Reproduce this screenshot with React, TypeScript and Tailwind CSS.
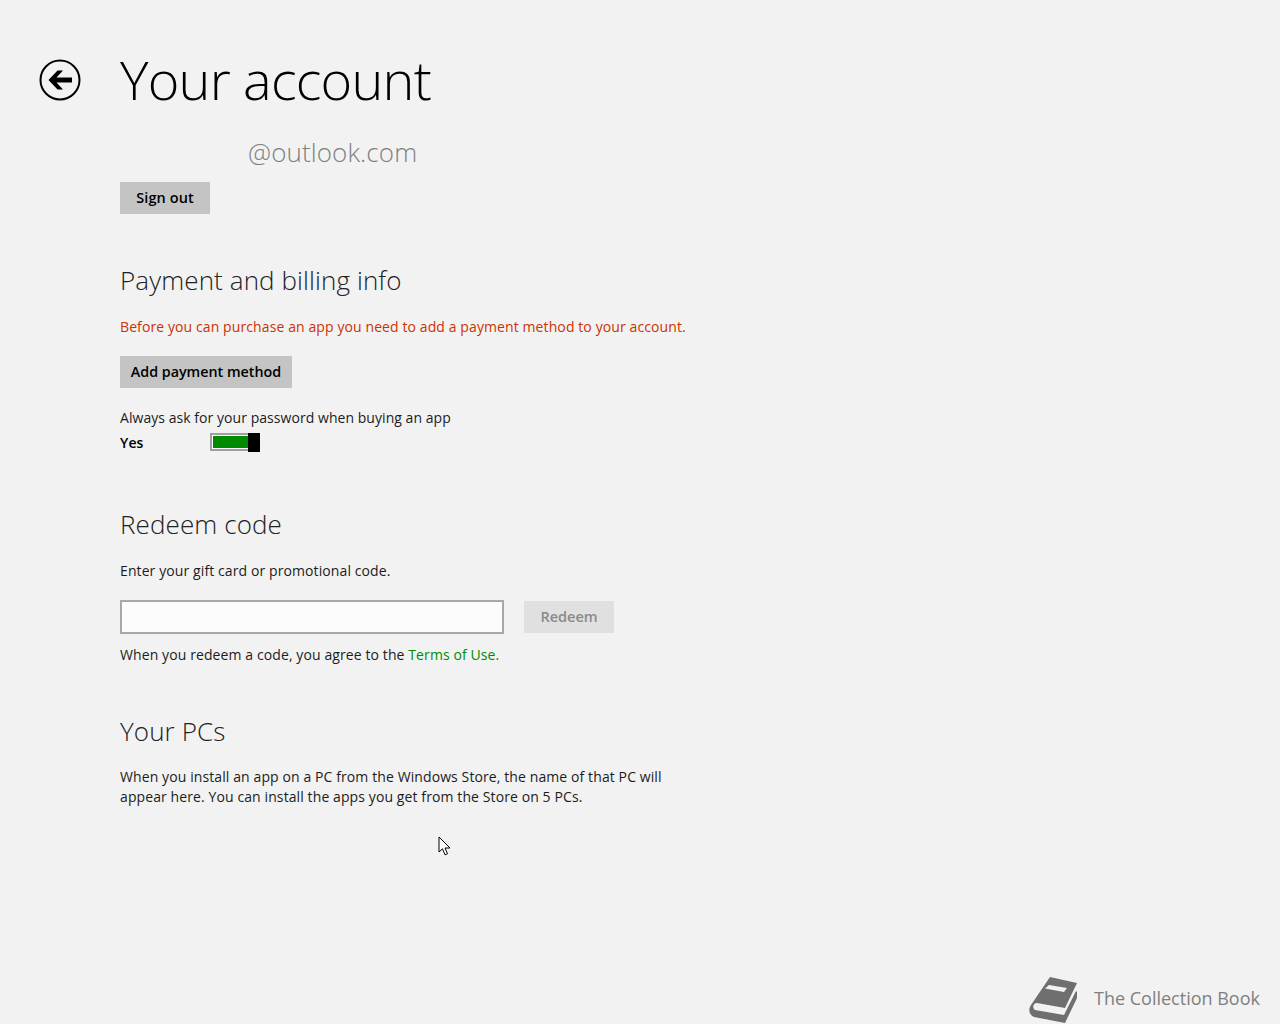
import React from "react";

const FONT = "font-['Open_Sans','Noto_Sans',sans-serif]";

function BackIcon() {
  return (
    <svg width="42" height="42" viewBox="0 0 42 42" className="block">
      <circle cx="21" cy="21" r="19.5" fill="none" stroke="#000" strokeWidth="2" />
      <path d="M9.5 21 L18.5 11.5 L24 11.5 L17.5 18.5 L33 18.5 L33 23.5 L17.5 23.5 L24 30.5 L18.5 30.5 Z" fill="#000" />
    </svg>
  );
}

function BookIcon() {
  return (
    <svg width="52" height="48" viewBox="0 0 52 48" className="block">
      <path
        d="M23 2 L50 8 L38 33 L10 28 C6 28 5 33 8 35 L37 40 L49 16 L50 17 L50 23 L38 48 L7 42 C2 40 1 34 4 30 Z"
        fill="#6f6f6f"
      />
      <path d="M22 10 L40 13 L37 17 L18 13.5 Z" fill="#f2f2f2" />
    </svg>
  );
}

function Cursor() {
  return (
    <svg width="14" height="21" viewBox="0 0 14 21" className="block">
      <path
        d="M1 1 L1 16 L4.5 12.8 L7 18.8 L9.5 17.8 L7 12 L12 12 Z"
        fill="#fff"
        stroke="#000"
        strokeWidth="1"
      />
    </svg>
  );
}

export default function App() {
  return (
    <div className={`${FONT} relative h-[1024px] overflow-hidden bg-[#f2f2f2] text-[#1c1c1c]`}>
      {/* Header */}
      <div className="flex pt-[39px] pl-[39px]">
        <div className="w-[81px] pt-[20px]">
          <BackIcon />
        </div>
        <h1 className="text-[54px] leading-[80px] font-light tracking-[-0.8px] text-black">Your account</h1>
      </div>

      <div className="w-[570px] pl-[120px] box-content tracking-[0.1px]">
        {/* Account */}
        <p className="mt-[13px] pl-[128px] text-[26px] leading-[40px] font-light text-[#808080]">@outlook.com</p>
        <button className="mt-[10px] block h-[32px] w-[90px] bg-[#c4c4c4] pb-[1px] text-[14.5px] font-semibold text-black">
          Sign out
        </button>

        {/* Payment */}
        <h2 className="mt-[48px] text-[26px] leading-[36px] font-light text-[#222]">Payment and billing info</h2>
        <p className="mt-[19px] text-[14px] leading-[20px] text-[#cc3300]">
          Before you can purchase an app you need to add a payment method to your account.
        </p>
        <button className="mt-[19px] block h-[32px] w-[172px] bg-[#c4c4c4] text-[14.3px] font-semibold tracking-normal text-black">
          Add payment method
        </button>
        <p className="mt-[20px] text-[14px] leading-[20px] tracking-[0.05px]">
          Always ask for your password when buying an app
        </p>
        <div className="mt-[4px] flex h-[20px] items-center">
          <span className="w-[90px] text-[14px] font-semibold text-black">Yes</span>
          <div className="flex h-[19px] w-[50px] items-stretch">
            <div className="my-[0.5px] flex-1 border-2 border-r-0 border-[#a0a0a0]">
              <div className="h-full border border-r-0 border-white bg-[#008a00]" />
            </div>
            <div className="w-[12px] bg-black" />
          </div>
        </div>

        {/* Redeem */}
        <h2 className="mt-[54px] text-[26px] leading-[36px] font-light text-[#222]">Redeem code</h2>
        <p className="mt-[19px] text-[14px] leading-[20px]">Enter your gift card or promotional code.</p>
        <div className="mt-[19px] flex items-center gap-[20px]">
          <input className="h-[34px] w-[384px] border-2 border-[#a8a8a8] bg-[#fcfcfc]" />
          <button className="h-[32px] w-[90px] bg-[#e0e0e0] text-[14.5px] font-semibold tracking-normal text-[#8a8a8a]">
            Redeem
          </button>
        </div>
        <p className="mt-[11px] text-[14px] leading-[20px]">
          When you redeem a code, you agree to the <span className="text-[#008a00]">Terms of Use.</span>
        </p>

        {/* PCs */}
        <h2 className="mt-[48px] text-[26px] leading-[36px] font-light text-[#222]">Your PCs</h2>
        <p className="mt-[18px] text-[14px] leading-[20px]">
          When you install an app on a PC from the Windows Store, the name of that PC will appear here. You can install
          the apps you get from the Store on 5 PCs.
        </p>
      </div>

      {/* Mouse pointer */}
      <div className="absolute left-[438px] top-[836px]">
        <Cursor />
      </div>

      {/* Watermark */}
      <div className="absolute left-[1027px] top-[975px] flex items-center gap-[15px]">
        <BookIcon />
        <span className="pb-[2px] text-[18px] text-[#808080]">The Collection Book</span>
      </div>
    </div>
  );
}
